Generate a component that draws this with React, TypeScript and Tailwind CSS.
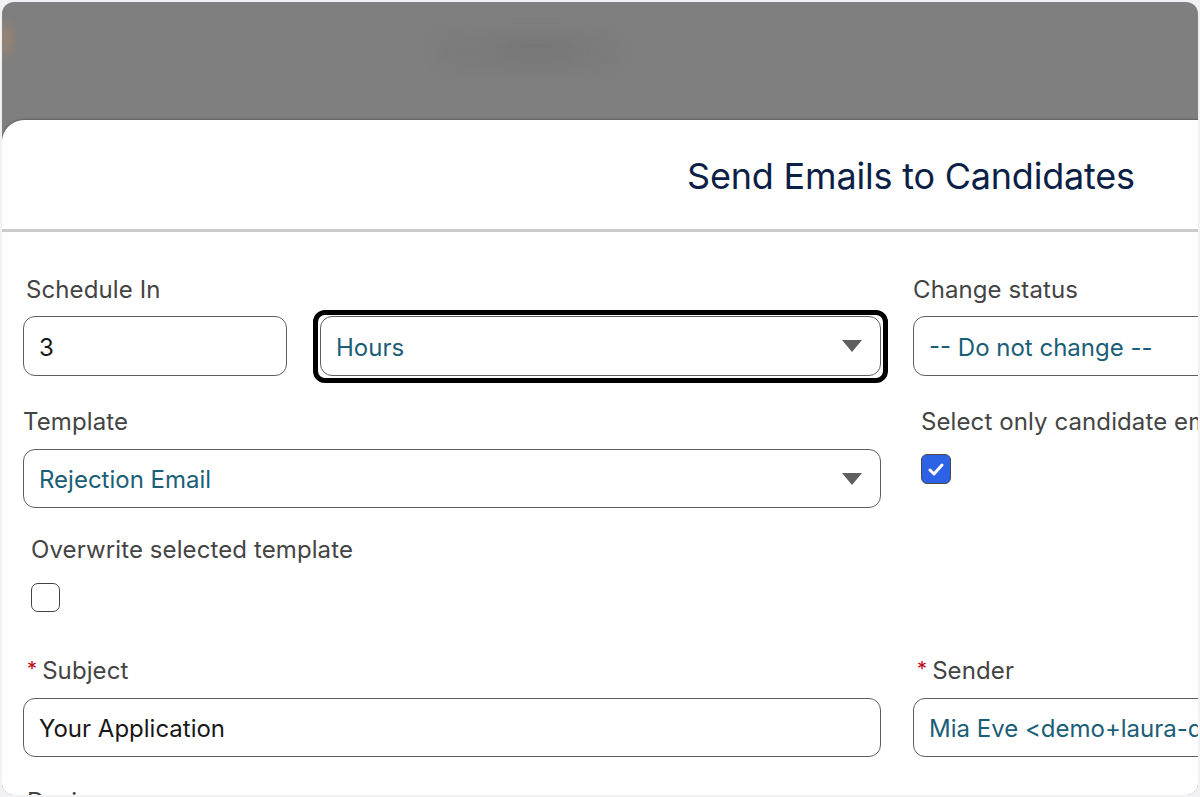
import React from "react";

function Caret() {
  return (
    <svg width="20" height="12" viewBox="0 0 20 12" className="absolute right-[18px] top-1/2 -translate-y-1/2">
      <polygon points="0,0 20,0 10,12" fill="#5f5f5f" />
    </svg>
  );
}

function Label({ children, required, className = "" }: { children: React.ReactNode; required?: boolean; className?: string }) {
  return (
    <div className={`h-[28px] flex items-center text-[24px] leading-[28px] tracking-[0.1px] text-[#444444] whitespace-nowrap ${className}`}>
      {required && <span className="text-[#ba0517] text-[20px] mr-[5px] -mt-[4px]">*</span>}
      {children}
    </div>
  );
}

function Field({
  value,
  select,
  teal,
  className = "",
  h = "h-[60px]",
}: {
  value: string;
  select?: boolean;
  teal?: boolean;
  className?: string;
  h?: string;
}) {
  return (
    <div
      className={`relative ${h} rounded-[12px] border-[1.5px] border-[#5e5e5e] bg-white flex items-center pl-[15px] pt-[3px] text-[24px] whitespace-nowrap overflow-hidden ${
        teal ? "text-[#1b5e78]" : "text-[#181818]"
      } ${className}`}
    >
      {value}
      {select && <Caret />}
    </div>
  );
}

export default function App() {
  return (
    <div className="w-[1200px] h-[797px] bg-[#f1f1f6] p-[2px] font-[Inter,'Noto_Sans',sans-serif] overflow-hidden">
      <div className="relative w-full h-full rounded-[12px] overflow-hidden bg-[#7f7f7f]">
        {/* blurred background page */}
        <div className="absolute left-[-10px] top-[22px] w-[20px] h-[30px] rounded-full bg-[#9a8470] blur-[6px]" />
        <div className="absolute left-[430px] top-[30px] w-[190px] h-[38px] rounded-full bg-[#7b7b7b] blur-[10px]" />
        <div className="absolute left-[500px] top-[40px] w-[70px] h-[16px] rounded-full bg-[#767676] blur-[8px]" />

        <div className="h-[118px]" />
        {/* Modal */}
        <div className="w-[1818px] bg-white rounded-tl-[22px] shadow-[0_-1px_2px_rgba(0,0,0,0.25)] h-[700px]">
          <div className="h-[109px] flex items-center justify-center">
            <h1 className="text-[36px] text-[#0c1f47] tracking-[-0.2px] pt-[2px]">Send Emails to Candidates</h1>
          </div>
          <div className="h-[3px] bg-[#cbcbcb]" />

          <div className="px-[21px] pt-[44px]">
            {/* Row A */}
            <div className="flex gap-[32px]">
              <div className="w-[858px] flex flex-col">
                <Label className="pl-[3px]">Schedule In</Label>
                <div className="mt-[12px] flex gap-[33px]">
                  <Field value="3" className="w-[264px]" />
                  <div className="relative flex-1">
                    <div className="absolute left-[-7px] right-[-7px] top-[-6px] bottom-[-7px] rounded-[12px] border-[5px] border-black" />
                    <Field value="Hours" select teal />
                  </div>
                </div>
              </div>
              <div className="flex-1 flex flex-col">
                <Label>Change status</Label>
                <Field value="-- Do not change --" select teal className="mt-[12px]" />
              </div>
            </div>

            {/* Row B */}
            <div className="flex gap-[32px] mt-[32px]">
              <div className="w-[858px] flex flex-col">
                <Label>Template</Label>
                <Field value="Rejection Email" select teal h="h-[59px]" className="mt-[13px]" />
              </div>
              <div className="flex-1 flex flex-col pl-[8px]">
                <Label>Select only candidate emails</Label>
                <div className="mt-[18px] w-[30px] h-[30px] rounded-[6px] bg-[#2c63e6] border-[1.5px] border-[#4a4a4a] flex items-center justify-center">
                  <svg width="16" height="13" viewBox="0 0 16 13">
                    <path d="M2 7 L6 11 L14 2" fill="none" stroke="white" strokeWidth="3" strokeLinecap="round" strokeLinejoin="round" />
                  </svg>
                </div>
              </div>
            </div>

            {/* Row C */}
            <div className="flex gap-[32px] mt-[28px]">
              <div className="w-[858px] flex flex-col pl-[8px]">
                <Label>Overwrite selected template</Label>
                <div className="mt-[19px] w-[29px] h-[29px] rounded-[7px] bg-white border-[1.5px] border-[#444444]" />
              </div>
            </div>

            {/* Row D */}
            <div className="flex gap-[32px] mt-[45px]">
              <div className="w-[858px] flex flex-col">
                <Label required className="pl-[4px]">Subject</Label>
                <Field value="Your Application" h="h-[59px]" className="mt-[13px]" />
              </div>
              <div className="flex-1 flex flex-col">
                <Label required className="pl-[4px]">Sender</Label>
                <Field value="Mia Eve <demo+laura-demo@example.com>" teal h="h-[59px]" className="mt-[13px]" />
              </div>
            </div>

            {/* Row E */}
            <div className="flex gap-[32px] mt-[31px]">
              <div className="w-[858px] flex flex-col">
                <Label className="pl-[4px]">Design</Label>
              </div>
            </div>
          </div>
        </div>
      </div>
    </div>
  );
}
